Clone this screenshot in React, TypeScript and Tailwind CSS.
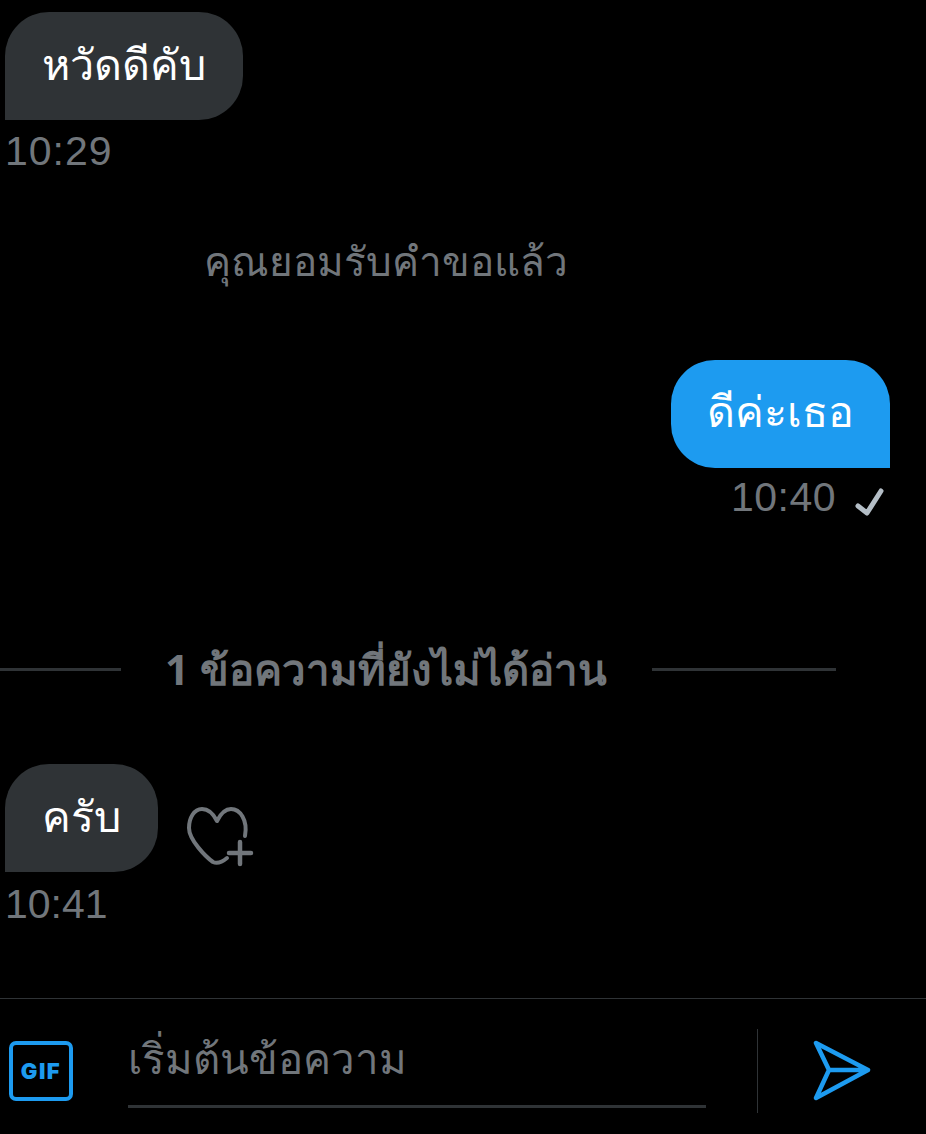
import type { ReactNode } from "react";

const font = "font-['Noto_Sans','Inter','Roboto',sans-serif]";

function IncomingBubble({ children }: { children: ReactNode }) {
  return (
    <div className="flex h-[108px] items-center rounded-[44px] rounded-bl-none bg-[#2f3336] px-[37px] pb-1 text-[43px] text-white">
      {children}
    </div>
  );
}

function Time({ children, className }: { children: ReactNode; className?: string }) {
  return <span className={`font-['Liberation_Sans',sans-serif] text-[41px] leading-[46px] text-[#71767b] ${className ?? ""}`}>{children}</span>;
}

function HeartPlus() {
  return (
    <svg width="70" height="62" viewBox="0 0 70 62" fill="none" stroke="#71767b" strokeWidth="4" strokeLinecap="round" strokeLinejoin="round" className="mt-[42px]">
      <path d="M59 30 C62 14 54 3 45 3 C38 3 34 9 31 15 C28 9 23 3 16 3 C8 3 3 12 3 22 C3 34 20 51 27 56 C31 58 35 57 41 52" />
      <path d="M54 36 V58 M43 47 H65" strokeWidth="4.5" />
    </svg>
  );
}

function GifIcon() {
  return (
    <div className="flex h-[60px] w-[64px] items-center justify-center rounded-[7px] border-[4px] border-[#1d9bf0] font-['Inter',sans-serif] text-[22px] font-black tracking-[1.5px] text-[#1d9bf0]">
      GIF
    </div>
  );
}

function SendIcon() {
  return (
    <svg width="60" height="62" viewBox="0 0 60 62" fill="none" stroke="#1d9bf0" strokeWidth="4.5" strokeLinecap="round" strokeLinejoin="round">
      <path d="M5 3 L57 30 L5 58 L18 30 Z M18 30 H57" />
    </svg>
  );
}

export default function App() {
  return (
    <div className={`flex h-[1134px] w-[926px] flex-col overflow-hidden bg-black ${font}`}>
      <div className="flex h-[998px] flex-col">
        <div className="flex flex-col items-start pl-[5px] pt-3">
          <IncomingBubble>หวัดดีคับ</IncomingBubble>
          <div className="mt-2">
            <Time className="tracking-[1px]">10:29</Time>
          </div>
        </div>

        <p className="mt-[62px] pl-[204px] text-[40.5px] leading-[50px] text-[#71767b]">คุณยอมรับคำขอแล้ว</p>

        <div className="mt-[74px] flex flex-col items-end pr-9">
          <div className="flex h-[108px] items-center rounded-[44px] rounded-br-none bg-[#1d9bf0] px-[36px] pb-[5px] text-[43px] text-white">
            ดีค่ะเธอ
          </div>
          <div className="mt-[6px] flex items-center gap-[18px]">
            <Time className="tracking-[0.5px]">10:40</Time>
            <svg width="36" height="36" viewBox="0 0 36 36" fill="none" stroke="#b4bec6" strokeWidth="5" strokeLinecap="round" strokeLinejoin="round" className="mt-[6px]">
              <path d="M4 24 L13 31 L27 9" />
            </svg>
          </div>
        </div>

        <div className="mt-[124px] flex items-center pr-[90px]">
          <div className="h-[3px] w-[121px] bg-[#2f3336]" />
          <span className="ml-[44px] mr-[45px] text-[42px] font-bold leading-[50px] text-[#71767b]">1 ข้อความที่ยังไม่ได้อ่าน</span>
          <div className="h-[3px] flex-1 bg-[#2f3336]" />
        </div>

        <div className="mt-[70px] flex flex-col items-start pl-[5px]">
          <div className="flex items-start gap-[28px]">
            <IncomingBubble>ครับ</IncomingBubble>
            <HeartPlus />
          </div>
          <div className="mt-[9px]">
            <Time>10:41</Time>
          </div>
        </div>
      </div>

      <div className="flex flex-1 items-center border-t border-[#2f3336] pl-[9px] pt-[9px]">
        <GifIcon />
        <div className="mb-[26px] ml-[55px] flex h-[90px] w-[578px] items-start self-end border-b-[3px] border-[#2f3336] pt-[15px] text-[42px] leading-[50px] text-[#71767b]">
          เริ่มต้นข้อความ
        </div>
        <div className="ml-[51px] h-[84px] w-px bg-[#2f3336]" />
        <div className="ml-[53px]">
          <SendIcon />
        </div>
      </div>
    </div>
  );
}
